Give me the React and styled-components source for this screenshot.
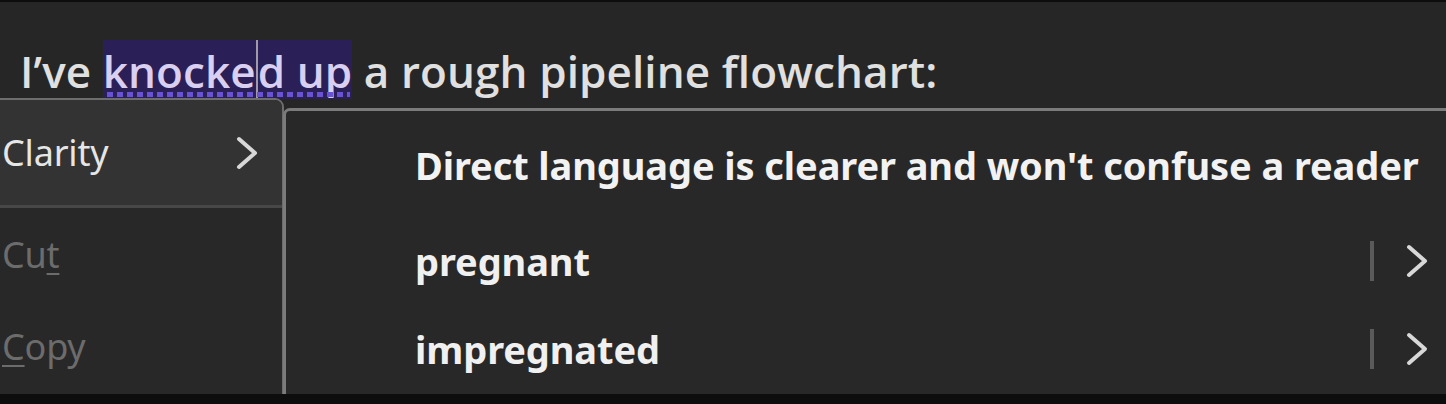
import React from 'react';
import styled, { createGlobalStyle } from 'styled-components';

const Global = createGlobalStyle`
  html, body { margin: 0; padding: 0; background: #262626; }
  body { width: 1446px; height: 404px; overflow: hidden; }
`;

const Page = styled.div`
  position: relative;
  width: 1446px;
  height: 404px;
  background: #262626;
  border-top: 2px solid #0d0d0d;
  box-sizing: border-box;
  overflow: hidden;
  font-family: "Open Sans", "Noto Sans", sans-serif;
`;

const Line = styled.p`
  margin: 0;
  padding: 38px 0 0 20px;
  height: 96px;
  box-sizing: border-box;
  font-size: 44px;
  font-weight: 600;
  line-height: 56px;
  color: #e0e0e0;
  letter-spacing: 0.1px;
  white-space: nowrap;
`;

const Flagged = styled.span`
  position: relative;
  display: inline-block;
  background: #2b1f57;
  color: #d9cff0;
  &::after {
    content: '';
    position: absolute;
    left: 4px;
    right: 2px;
    bottom: 2px;
    height: 5px;
    background: repeating-linear-gradient(90deg, #6a52d6 0 6px, transparent 6px 10px);
  }
`;

const Caret = styled.span`
  display: inline-block;
  width: 0;
  height: 60px;
  margin-bottom: -12px;
  border-left: 2px solid #a09aa8;
`;

const Menu = styled.div`
  position: absolute;
  left: -10px;
  top: 96px;
  width: 294px;
  height: 320px;
  background: #282828;
  border: 2px solid #6d6d6d;
  border-top-right-radius: 9px;
  box-sizing: border-box;
  font-family: "Noto Sans", "Open Sans", sans-serif;
`;

const MenuItem = styled.div`
  display: flex;
  align-items: center;
  justify-content: space-between;
  height: ${p => p.$h}px;
  padding: 0 22px 0 10px;
  box-sizing: border-box;
  font-size: 36px;
  letter-spacing: -0.2px;
  color: ${p => (p.$disabled ? '#6c6c6c' : '#e6e6e6')};
  background: ${p => (p.$active ? '#333333' : 'transparent')};
  border-bottom: ${p => (p.$active ? '3px solid #474747' : 'none')};
  border-top-right-radius: ${p => (p.$active ? '7px' : '0')};
`;

const Key = styled.span`
  text-decoration: underline;
  text-underline-offset: 5px;
  text-decoration-thickness: 2px;
`;

const Sub = styled.div`
  position: absolute;
  left: 283px;
  top: 106px;
  width: 1180px;
  height: 320px;
  background: #282828;
  border-top: 3px solid #7b7b7b;
  border-left: 3px solid #7b7b7b;
  border-top-left-radius: 7px;
  box-sizing: border-box;
  padding: 0 16px 0 129px;
  font-family: "Noto Sans", "Open Sans", sans-serif;
`;

const Heading = styled.div`
  height: 108px;
  display: flex;
  align-items: center;
  font-size: 38px;
  font-weight: 700;
  letter-spacing: -0.1px;
  color: #f2f2f2;
  white-space: nowrap;
`;

const Option = styled.div`
  display: flex;
  align-items: center;
  justify-content: space-between;
  width: 1015px;
  height: 88px;
  margin-top: ${p => p.$mt || 0}px;
  font-size: 38px;
  font-weight: 700;
  letter-spacing: -0.1px;
  color: #f0f0f0;
`;

const Tail = styled.div`
  display: flex;
  align-items: center;
  gap: 30px;
`;

const Bar = styled.span`
  width: 4px;
  height: 40px;
  background: #5a5a5a;
`;

const Chevron = ({ color = '#d8d8d8' }) => (
  <svg width="26" height="36" viewBox="0 0 26 36">
    <path d="M5 4 L21 18 L5 32" fill="none" stroke={color} strokeWidth="4" strokeLinecap="round" strokeLinejoin="round" />
  </svg>
);

const Footer = styled.div`
  position: absolute;
  left: 0;
  right: 0;
  bottom: 0;
  height: 10px;
  background: #0d0d0d;
  z-index: 5;
`;

export default function App() {
  return (
    <Page>
      <Global />
      <Line>
        I’ve <Flagged>knocke<Caret />d up</Flagged> a rough pipeline flowchart:
      </Line>
      <Menu>
        <MenuItem $h={108} $active>
          <span>Clarity</span>
          <Chevron />
        </MenuItem>
        <MenuItem $h={92} $disabled>
          <span>Cu<Key>t</Key></span>
        </MenuItem>
        <MenuItem $h={92} $disabled>
          <span><Key>C</Key>opy</span>
        </MenuItem>
      </Menu>
      <Sub>
        <Heading>Direct language is clearer and won't confuse a reader</Heading>
        <Option $mt={-2}>
          <span>pregnant</span>
          <Tail><Bar /><Chevron /></Tail>
        </Option>
        <Option>
          <span>impregnated</span>
          <Tail><Bar /><Chevron /></Tail>
        </Option>
      </Sub>
      <Footer />
    </Page>
  );
}
